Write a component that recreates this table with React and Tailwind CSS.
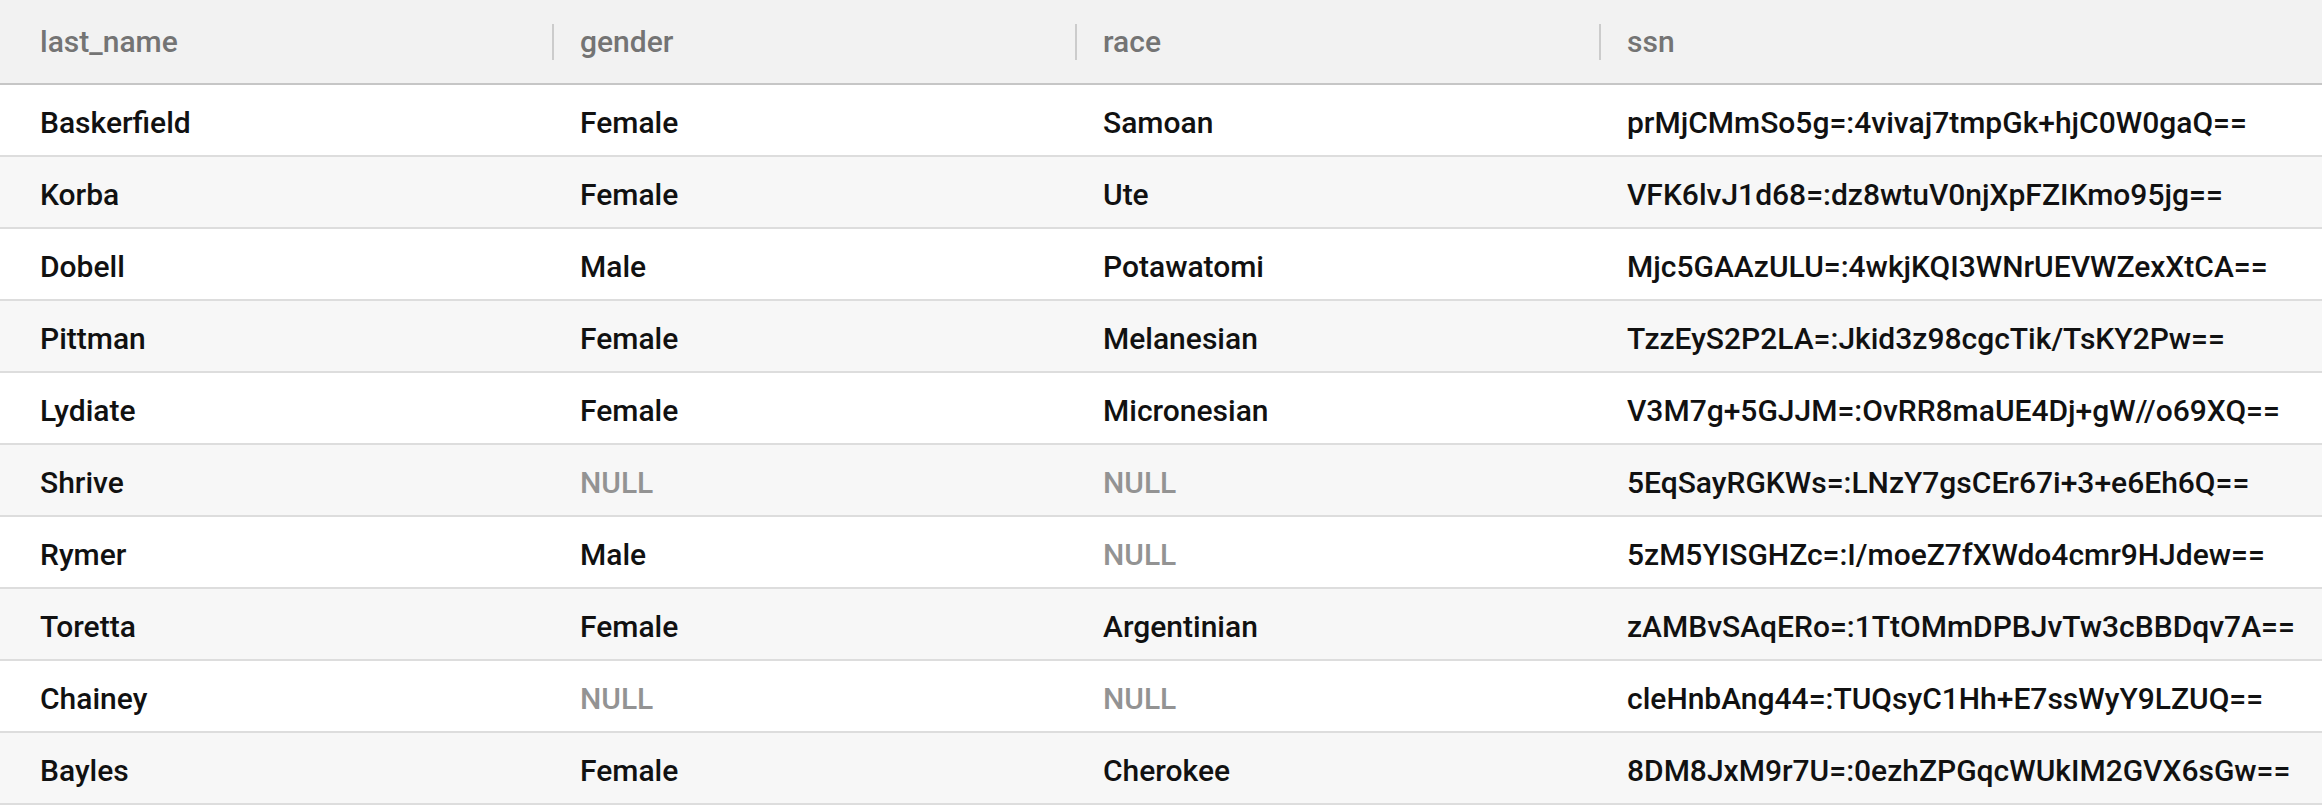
import React from "react";

const rows = [
  ["Baskerfield", "Female", "Samoan", "prMjCMmSo5g=:4vivaj7tmpGk+hjC0W0gaQ=="],
  ["Korba", "Female", "Ute", "VFK6lvJ1d68=:dz8wtuV0njXpFZIKmo95jg=="],
  ["Dobell", "Male", "Potawatomi", "Mjc5GAAzULU=:4wkjKQI3WNrUEVWZexXtCA=="],
  ["Pittman", "Female", "Melanesian", "TzzEyS2P2LA=:Jkid3z98cgcTik/TsKY2Pw=="],
  ["Lydiate", "Female", "Micronesian", "V3M7g+5GJJM=:OvRR8maUE4Dj+gW//o69XQ=="],
  ["Shrive", null, null, "5EqSayRGKWs=:LNzY7gsCEr67i+3+e6Eh6Q=="],
  ["Rymer", "Male", null, "5zM5YISGHZc=:I/moeZ7fXWdo4cmr9HJdew=="],
  ["Toretta", "Female", "Argentinian", "zAMBvSAqERo=:1TtOMmDPBJvTw3cBBDqv7A=="],
  ["Chainey", null, null, "cleHnbAng44=:TUQsyC1Hh+E7ssWyY9LZUQ=="],
  ["Bayles", "Female", "Cherokee", "8DM8JxM9r7U=:0ezhZPGqcWUkIM2GVX6sGw=="],
];

const headers = ["last_name", "gender", "race", "ssn"];

function Cell({ value }) {
  if (value === null) {
    return <div className="pl-10 pt-[6px] text-[#939393]">NULL</div>;
  }
  return <div className="pl-10 pt-[6px] text-[#111111]">{value}</div>;
}

export default function App() {
  return (
    <div
      className="w-[2322px] h-[807px] overflow-hidden bg-white text-[30px] leading-none font-medium"
      style={{ fontFamily: "Roboto, 'Liberation Sans', sans-serif" }}
    >
      <div className="grid grid-cols-[540px_523px_524px_1fr] h-[85px] items-center bg-[#f2f2f2] border-b-2 border-[#c6c6c6] text-[#747474]">
        {headers.map((h, i) => (
          <div key={h} className="flex items-center h-full">
            {i === 0 ? (
              <span className="pl-10">{h}</span>
            ) : (
              <>
                <span className="ml-3 w-[2px] h-[36px] bg-[#cccccc]" />
                <span className="ml-[26px]">{h}</span>
              </>
            )}
          </div>
        ))}
      </div>
      {rows.map((r, idx) => (
        <div
          key={idx}
          className={`grid grid-cols-[540px_523px_524px_1fr] h-[72px] items-center border-b-2 border-[#dddddd] ${
            idx % 2 === 1 ? "bg-[#f7f7f7]" : "bg-white"
          }`}
        >
          {r.map((v, j) => (
            <Cell key={j} value={v} />
          ))}
        </div>
      ))}
    </div>
  );
}
